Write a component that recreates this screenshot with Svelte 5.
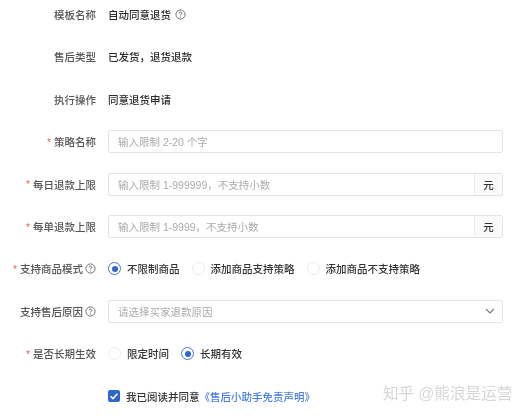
<script>
  const modes = [
    { label: '不限制商品', on: true },
    { label: '添加商品支持策略', on: false },
    { label: '添加商品不支持策略', on: false }
  ]
  const terms = [
    { label: '限定时间', on: false },
    { label: '长期有效', on: true }
  ]
</script>

{#snippet help()}
  <svg class="help" viewBox="0 0 12 12" width="11" height="11">
    <circle cx="6" cy="6" r="5" fill="none" stroke="#555" stroke-width="0.9" />
    <path d="M4.5 4.8c0-.9.7-1.4 1.5-1.4s1.5.5 1.5 1.3c0 1.2-1.5 1.2-1.5 2.3" fill="none" stroke="#555" stroke-width="0.9" />
    <circle cx="6" cy="8.6" r="0.55" fill="#555" />
  </svg>
{/snippet}

{#snippet radio(item)}
  <span class="option">
    <span class="dot" class:on={item.on}></span>
    {item.label}
  </span>
{/snippet}

<main>
  <div class="row">
    <div class="label">模板名称</div>
    <div class="value">自动同意退货{@render help()}</div>
  </div>
  <div class="row">
    <div class="label">售后类型</div>
    <div class="value">已发货，退货退款</div>
  </div>
  <div class="row">
    <div class="label">执行操作</div>
    <div class="value">同意退货申请</div>
  </div>
  <div class="row">
    <div class="label"><span class="req">*</span>策略名称</div>
    <div class="input">输入限制 2-20 个字</div>
  </div>
  <div class="row">
    <div class="label"><span class="req">*</span>每日退款上限</div>
    <div class="input">输入限制 1-999999，不支持小数<span class="unit">元</span></div>
  </div>
  <div class="row">
    <div class="label"><span class="req">*</span>每单退款上限</div>
    <div class="input">输入限制 1-9999，不支持小数<span class="unit">元</span></div>
  </div>
  <div class="row">
    <div class="label"><span class="req">*</span>支持商品模式{@render help()}</div>
    <div class="options wide">
      {#each modes as m}{@render radio(m)}{/each}
    </div>
  </div>
  <div class="row">
    <div class="label">支持售后原因{@render help()}</div>
    <div class="input select">
      请选择买家退款原因
      <svg class="chev" viewBox="0 0 10 6" width="10" height="6">
        <path d="M1 1l4 4 4-4" fill="none" stroke="#777" stroke-width="1.1" />
      </svg>
    </div>
  </div>
  <div class="row">
    <div class="label"><span class="req">*</span>是否长期生效</div>
    <div class="options">
      {#each terms as t}{@render radio(t)}{/each}
    </div>
  </div>
  <div class="row">
    <div class="label"></div>
    <div class="agree">
      <span class="check">
        <svg viewBox="0 0 12 12" width="12" height="12">
          <path d="M2.6 6.2l2.4 2.4 4.4-4.8" fill="none" stroke="#fff" stroke-width="1.5" />
        </svg>
      </span>
      我已阅读并同意<a href="#top">《售后小助手免责声明》</a>
    </div>
  </div>
  <div class="mark">知乎 @熊浪是运营</div>
</main>

<style>
  :global(body) {
    margin: 0;
    background: #fff;
  }

  main {
    position: relative;
    width: 526px;
    height: 416px;
    overflow: hidden;
    box-sizing: border-box;
    padding-top: 3.6px;
    display: flex;
    flex-direction: column;
    gap: 20.4px;
    font-family: "Liberation Sans", "Noto Sans CJK SC", sans-serif;
    font-size: 10.5px;
    font-weight: 500;
    color: #333;
    filter: blur(0.4px);
  }

  .row {
    height: 22px;
    display: flex;
    align-items: center;
    flex-shrink: 0;
  }

  .label {
    width: 96px;
    margin-right: 12px;
    display: flex;
    align-items: center;
    justify-content: flex-end;
    white-space: nowrap;
    color: #555;
  }

  .req {
    color: #e8685f;
    margin-right: 3px;
  }

  .value {
    display: flex;
    align-items: center;
    color: #2b2b2b;
  }

  .help {
    margin-left: 2px;
    flex-shrink: 0;
  }

  .value .help {
    margin-left: 4px;
  }

  .input {
    width: 395px;
    height: 23px;
    box-sizing: border-box;
    padding-left: 9px;
    border: 1px solid #e4e4e4;
    border-radius: 2px;
    display: flex;
    align-items: center;
    font-weight: 400;
    color: #aaa;
    position: relative;
  }

  .unit {
    margin-left: auto;
    width: 27px;
    height: 100%;
    display: flex;
    align-items: center;
    justify-content: center;
    background: #fafafa;
    border-left: 1px solid #ececec;
    font-weight: 500;
    color: #333;
  }

  .select {
    justify-content: space-between;
    padding-right: 7px;
  }

  .options {
    display: flex;
    gap: 12px;
  }

  .option {
    display: flex;
    align-items: center;
    gap: 6px;
    color: #333;
  }

  .dot {
    width: 11px;
    height: 11px;
    border: 1px solid #ececec;
    border-radius: 50%;
    box-sizing: content-box;
    display: flex;
    align-items: center;
    justify-content: center;
  }

  .dot.on {
    border-color: #3f76d8;
  }

  .dot.on::after {
    content: "";
    width: 6px;
    height: 6px;
    border-radius: 50%;
    background: #2f66cc;
  }

  .agree {
    display: flex;
    align-items: center;
    color: #333;
  }

  .check {
    width: 12px;
    height: 12px;
    margin-right: 6px;
    border-radius: 2px;
    background: #2d66cc;
    display: flex;
  }

  .agree a {
    color: #4a7fe0;
    text-decoration: none;
  }

  .mark {
    position: absolute;
    left: 383px;
    top: 381px;
    font-size: 15.6px;
    font-weight: 400;
    color: #d6d6d6;
    white-space: nowrap;
  }
</style>
